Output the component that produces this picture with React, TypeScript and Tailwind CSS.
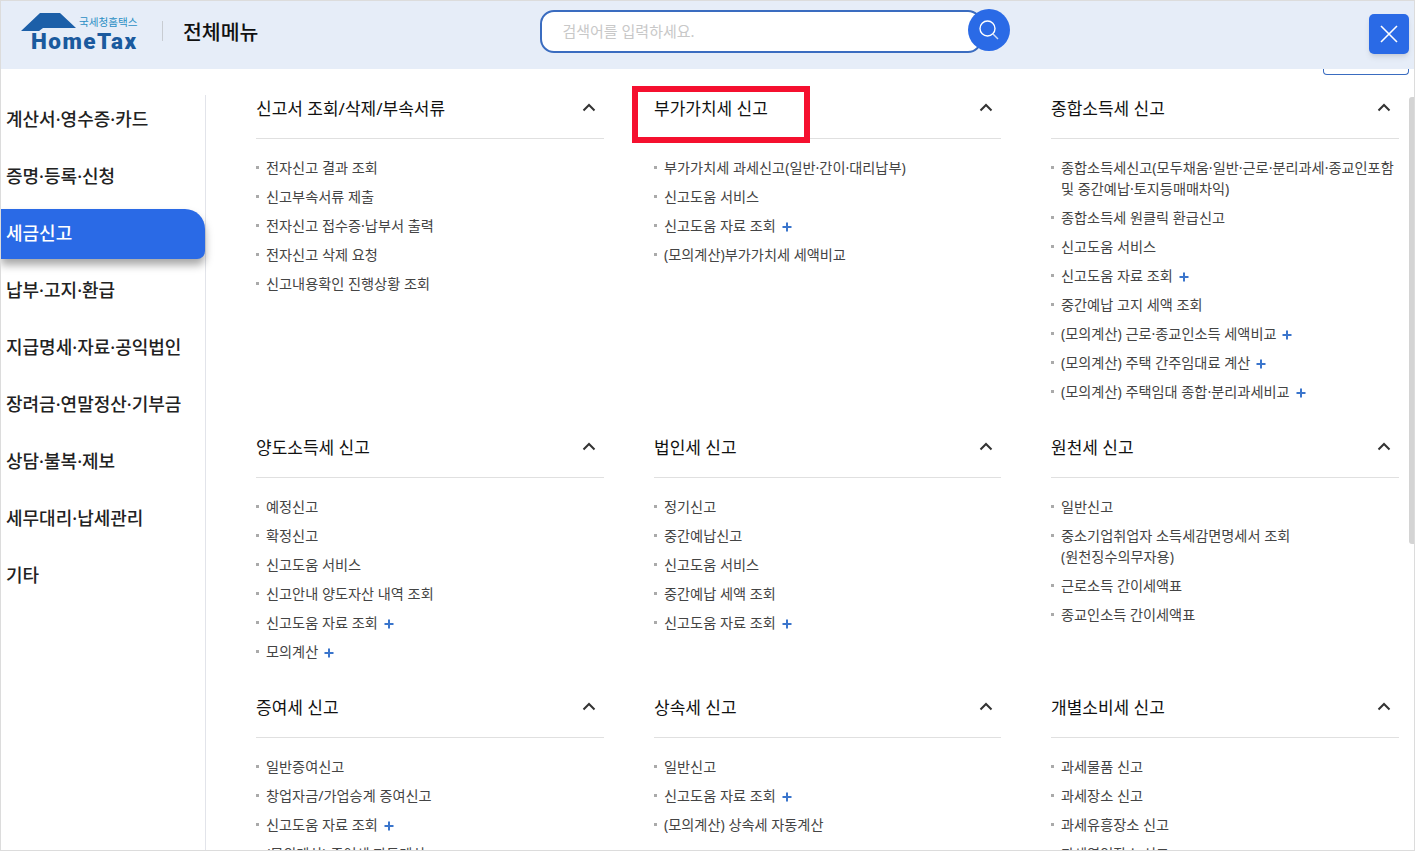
interface MenuItem {
  label: string;
  plus?: boolean;
  lines?: string[];
}

interface MenuSection {
  title: string;
  items: MenuItem[];
}

const sideMenu = [
  "계산서·영수증·카드",
  "증명·등록·신청",
  "세금신고",
  "납부·고지·환급",
  "지급명세·자료·공익법인",
  "장려금·연말정산·기부금",
  "상담·불복·제보",
  "세무대리·납세관리",
  "기타",
];

const rows: MenuSection[][] = [
  [
    {
      title: "신고서 조회/삭제/부속서류",
      items: [
        { label: "전자신고 결과 조회" },
        { label: "신고부속서류 제출" },
        { label: "전자신고 접수증·납부서 출력" },
        { label: "전자신고 삭제 요청" },
        { label: "신고내용확인 진행상황 조회" },
      ],
    },
    {
      title: "부가가치세 신고",
      items: [
        { label: "부가가치세 과세신고(일반·간이·대리납부)" },
        { label: "신고도움 서비스" },
        { label: "신고도움 자료 조회", plus: true },
        { label: "(모의계산)부가가치세 세액비교" },
      ],
    },
    {
      title: "종합소득세 신고",
      items: [
        {
          label: "",
          lines: ["종합소득세신고(모두채움·일반·근로·분리과세·종교인포함", "및 중간예납·토지등매매차익)"],
        },
        { label: "종합소득세 원클릭 환급신고" },
        { label: "신고도움 서비스" },
        { label: "신고도움 자료 조회", plus: true },
        { label: "중간예납 고지 세액 조회" },
        { label: "(모의계산) 근로·종교인소득 세액비교", plus: true },
        { label: "(모의계산) 주택 간주임대료 계산", plus: true },
        { label: "(모의계산) 주택임대 종합·분리과세비교", plus: true },
      ],
    },
  ],
  [
    {
      title: "양도소득세 신고",
      items: [
        { label: "예정신고" },
        { label: "확정신고" },
        { label: "신고도움 서비스" },
        { label: "신고안내 양도자산 내역 조회" },
        { label: "신고도움 자료 조회", plus: true },
        { label: "모의계산", plus: true },
      ],
    },
    {
      title: "법인세 신고",
      items: [
        { label: "정기신고" },
        { label: "중간예납신고" },
        { label: "신고도움 서비스" },
        { label: "중간예납 세액 조회" },
        { label: "신고도움 자료 조회", plus: true },
      ],
    },
    {
      title: "원천세 신고",
      items: [
        { label: "일반신고" },
        { label: "", lines: ["중소기업취업자 소득세감면명세서 조회", "(원천징수의무자용)"] },
        { label: "근로소득 간이세액표" },
        { label: "종교인소득 간이세액표" },
      ],
    },
  ],
  [
    {
      title: "증여세 신고",
      items: [
        { label: "일반증여신고" },
        { label: "창업자금/가업승계 증여신고" },
        { label: "신고도움 자료 조회", plus: true },
        { label: "(모의계산) 증여세 자동계산" },
      ],
    },
    {
      title: "상속세 신고",
      items: [
        { label: "일반신고" },
        { label: "신고도움 자료 조회", plus: true },
        { label: "(모의계산) 상속세 자동계산" },
      ],
    },
    {
      title: "개별소비세 신고",
      items: [
        { label: "과세물품 신고" },
        { label: "과세장소 신고" },
        { label: "과세유흥장소 신고" },
        { label: "과세영업장소 신고" },
      ],
    },
  ],
];

function Logo() {
  return (
    <div className="relative w-[118px] h-[38px] shrink-0">
      <svg className="absolute left-0 top-0" width="118" height="38" viewBox="0 0 118 38" aria-hidden="true">
        <path d="M0 19 L19 1 L39 1 L55 16 L22 16 L18 19 Z" fill="#1c5fa8" />
      </svg>
      <span className="absolute left-[10px] top-[16px] text-[22.5px] leading-[26px] font-black text-[#1a5a9e] font-['Roboto',sans-serif] tracking-[1.5px]">
        HomeTax
      </span>
      <span className="absolute left-[58px] top-[3px] text-[10.6px] leading-[14px] text-[#2b8fc4] whitespace-nowrap">
        국세청홈택스
      </span>
    </div>
  );
}

function Section({ section }: { section: MenuSection }) {
  return (
    <section className="pb-[17px]">
      <div className="flex items-center justify-between h-[51px] pb-[9px] border-b border-[#e0e0e0]">
        <h3 className="text-[17px] leading-[24px] font-normal text-[#111]">{section.title}</h3>
        <svg className="mr-[8px] -mt-[2px]" width="14" height="9" viewBox="0 0 14 9" fill="none" aria-hidden="true">
          <path d="M1.5 7.5 L7 2 L12.5 7.5" stroke="#333" strokeWidth="2" />
        </svg>
      </div>
      <ul className="pt-[18px]">
        {section.items.map((item, i) => (
          <li key={i} className="relative pl-[10px] mb-[8px] text-[14.2px] leading-[21px] text-[#444]">
            <span className="absolute left-0 top-[9px] w-[3px] h-[3px] bg-[#aaa]" />
            {item.lines
              ? item.lines.map((line) => (
                  <span key={line} className="block whitespace-nowrap">
                    {line}
                  </span>
                ))
              : item.label}
            {item.plus && (
              <svg className="inline-block ml-[6px] -mt-[1px] align-middle" width="10" height="10" viewBox="0 0 10 10" aria-hidden="true">
                <path d="M0.5 5 H9.5 M5 0.5 V9.5" stroke="#3a75cc" strokeWidth="2" />
              </svg>
            )}
          </li>
        ))}
      </ul>
    </section>
  );
}

export default function App() {
  return (
    <div className="relative h-[851px] overflow-hidden bg-white border border-[#dcdcdc] font-['Noto_Sans','Noto_Sans_CJK_KR',sans-serif]">
      <header className="flex items-center h-[68px] bg-[#e6edf8] pl-[20px] pb-[8px]">
        <Logo />
        <div className="w-px h-[20px] ml-[23px] bg-[#c8ccd2]" />
        <h1 className="ml-[20px] mt-[2px] text-[20.5px] leading-[30px] font-medium text-[#111] whitespace-nowrap">전체메뉴</h1>
        <div className="flex items-center ml-[282px]">
          <div className="flex items-center w-[442px] h-[43px] pl-[20px] bg-white border-2 border-[#3a6cc0] rounded-[14px] text-[15px] text-[#c8c8c8]">
            검색어를 입력하세요.
          </div>
          <button className="flex items-center justify-center w-[42px] h-[42px] -ml-[14px] -mt-[2px] rounded-full bg-[#2a6ae6]">
            <svg width="24" height="24" viewBox="0 0 24 24" fill="none" aria-hidden="true">
              <circle cx="10.5" cy="10.5" r="7.5" stroke="white" strokeWidth="1.4" />
              <path d="M16 16 L21 21" stroke="#cfdcf5" strokeWidth="1.4" />
            </svg>
          </button>
        </div>
      </header>

      <button className="absolute right-[5px] top-[13px] z-10 flex items-center justify-center w-[40px] h-[40px] rounded-[5px] bg-[#2a6ae6] shadow-md">
        <svg width="20" height="20" viewBox="0 0 20 20" fill="none" aria-hidden="true">
          <path d="M2 2 L18 18 M18 2 L2 18" stroke="white" strokeWidth="1.6" />
        </svg>
      </button>
      <div className="absolute right-[5px] top-[68px] w-[86px] h-[6px] bg-white border border-t-0 border-[#3a6cc0] rounded-b-[4px]" />
      <div className="absolute right-0 top-[96px] w-[5px] h-[447px] bg-[#d4d4d4] rounded-l-[3px]" />

      <div className="flex">
        <nav className="w-[205px] mt-[26px] h-[757px] border-r border-[#e2e4ea] shrink-0">
          <ul>
            {sideMenu.map((label) => (
              <li
                key={label}
                className={
                  label === "세금신고"
                    ? "flex items-center h-[50px] mb-[7px] pl-[5px] pb-[2px] text-[18px] font-medium text-white bg-[#2a6ae6] rounded-tr-[20px] rounded-br-[8px] shadow-[0_6px_8px_rgba(0,0,0,0.35)]"
                    : "flex items-center h-[50px] mb-[7px] pl-[5px] pb-[2px] text-[18px] font-medium text-[#222]"
                }
              >
                {label}
              </li>
            ))}
          </ul>
        </nav>
        <main className="flex-1 pl-[50px] pr-[15px] pt-[19px]">
          {rows.map((row, i) => (
            <div key={i} className="grid grid-cols-[348px_347px_348px] gap-x-[50px]">
              {row.map((section) => (
                <Section key={section.title} section={section} />
              ))}
            </div>
          ))}
        </main>
      </div>

      <div className="absolute left-[631px] top-[85px] w-[178px] h-[57px] border-[6px] border-[#f5102f]" />
    </div>
  );
}
